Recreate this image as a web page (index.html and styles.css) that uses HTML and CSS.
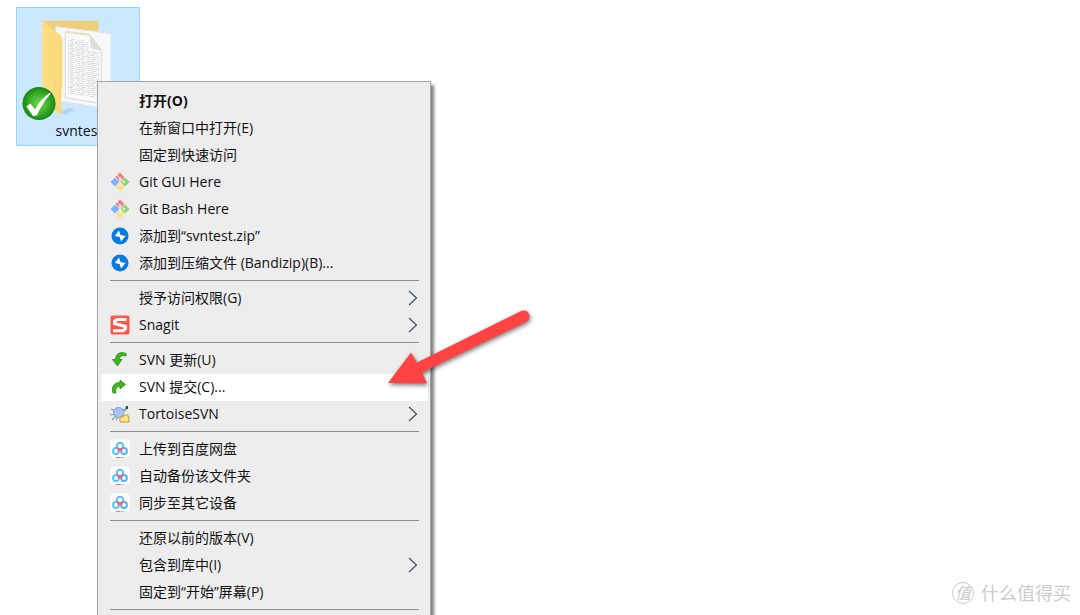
FILE: index.html
```html
<!DOCTYPE html>
<html lang="zh-CN">

<head>
    <meta charset="UTF-8">
    <meta name="viewport" content="width=device-width, initial-scale=1.0">
    <title>svntest</title>
    <link rel="stylesheet" href="styles.css">
</head>

<body>
    <!-- shared icons -->
    <svg class="sprite" aria-hidden="true">
        <symbol id="git" viewBox="0 0 20 20">
            <path d="M10 .5l4.500 4.500L10 9.500 5.500 5z" fill="#f87c7c" />
            <path d="M5 5.500L9.500 10 5 14.500.5 10z" fill="#80b3ff" />
            <path d="M15 5.500l4.500 4.500-4.500 4.500L10.500 10z" fill="#88d96c" />
            <path d="M10 10.500l4.500 4.500-4.500 4.500L5.500 15z" fill="#ffe180" />
            <path d="M7 3l3 3v8M10 7l4 3" fill="none" stroke="#ededed" stroke-width="1" />
            <circle cx="10" cy="6.500" r="1.200" fill="#ededed" />
            <circle cx="10" cy="13.500" r="1.200" fill="#ededed" />
            <circle cx="14" cy="10" r="1.200" fill="#ededed" />
        </symbol>
        <symbol id="bandizip" viewBox="0 0 20 20">
            <circle cx="10" cy="10" r="8.500" fill="#0a7ade" />
            <path d="M9 4.500l1.500 4.500 5 1-4.500 5.500-1.300-4.500-5-1z" fill="#fff" />
        </symbol>
        <symbol id="snagit" viewBox="0 0 20 20">
            <rect x=".5" y=".5" width="19" height="19" rx="2" fill="#ff5548" />
            <path d="M16.500 4.500H7L4.500 6.300V8.500l11 3v2.300L13 15.800H3" fill="none" stroke="#fff" stroke-width="3" />
        </symbol>
        <symbol id="update" viewBox="0 0 20 20">
            <path d="M16 3.500C10 1 5.500 4 5.500 9.500H2.500l5 6.500L12 9.500H9.500c0-3 2-4.500 6.500-3.500z" fill="#42b519" stroke="#2b8a22" stroke-width=".8" />
        </symbol>
        <symbol id="commit" viewBox="0 0 20 20">
            <path d="M3 16C1 10 4 5.500 10 5.500V3l5.500 4.500L10 12V9.500C7 9.500 5 11 6 16z" fill="#42b519" stroke="#2b8a22" stroke-width=".8" />
        </symbol>
        <symbol id="tortoise" viewBox="0 0 20 20">
            <path d="M1 5l5 2M2 16l4-4M0 11l6-1M6 16l2-3M12 6l4-1" fill="none" stroke="#8399ad" stroke-width="1.200" />
            <circle cx="8.500" cy="8.500" r="5" fill="#a5c5fa" stroke="#7898cf" />
            <path d="M13 7l2-4 3-1-1 4-4 3z" fill="#91abc4" />
            <path d="M17 2v3" stroke="#24445d" stroke-width="2" />
            <path d="M10 13h3l1-2h4v2h1v5h-9z" fill="#ffe48a" stroke="#c69a31" />
        </symbol>
        <symbol id="baidu" viewBox="0 0 20 20">
            <rect x=".5" y=".5" width="19" height="18" rx="4" fill="#fff" />
            <circle cx="10" cy="7" r="3.300" fill="none" stroke="#58c0f8" stroke-width="1.900" />
            <circle cx="6" cy="12" r="2.900" fill="none" stroke="#52c8fb" stroke-width="2" />
            <circle cx="14" cy="12" r="2.900" fill="none" stroke="#52b2f8" stroke-width="2" />
            <path d="M7 8.500q3 3.500 6 0M10 10l-2 2M10 10l2 2" fill="none" stroke="#f45f7c" stroke-width="1.900" />
            <path d="M6 18.500h4" stroke="#f76c88" />
            <path d="M10 18.500h4" stroke="#88cdf8" />
        </symbol>
        <symbol id="chevron" viewBox="0 0 10 16">
            <path d="M1 1l7.500 7L1 15" fill="none" stroke="#434765" stroke-width="1.200" />
        </symbol>
    </svg>

    <main class="desktop">
        <div class="folder">
            <svg class="folder-icon" viewBox="0 0 112 112" aria-hidden="true">
                <defs>
                    <linearGradient id="flap" x2="1">
                        <stop offset="0" stop-color="#ffdf87" />
                        <stop offset="1" stop-color="#fbd777" />
                    </linearGradient>
                    <radialGradient id="ball">
                        <stop offset="0" stop-color="#6ed651" />
                        <stop offset=".6" stop-color="#3bae28" />
                        <stop offset="1" stop-color="#168716" />
                    </radialGradient>
                    <pattern id="writing" width="11" height="6" patternUnits="userSpaceOnUse" patternTransform="skewY(8)">
                        <path d="M0 .5h5M6 .5h4M2 2.500h3M6 2.500h5M0 4.500h2M3 4.500h6" stroke="#d2d4d6" stroke-width=".9" />
                    </pattern>
                </defs>
                <path d="M40 103l9-5 5 3-9 5z" fill="#b4d5f0" />
                <path d="M21 9h58v75H40z" fill="#f0cf79" />
                <path d="M35 15l57 7v78l-57-9z" fill="#f5f7f8" stroke="#dce2e6" />
                <path d="M45 21l25 3 12 16v54l-37-6z" fill="#fafafa" stroke="#d9dadb" />
                <path d="M48 27l21 3v10h11v49l-32-5z" fill="url(#writing)" />
                <path d="M46 20l24 3 12 16" fill="none" stroke="#edda9e" />
                <path d="M70 24l12 16-11-3z" fill="#dde0e2" />
                <path d="M21 9l19 15q2 2 2 5v48l-1 4v22q-1 4-4 1L21 90z" fill="url(#flap)" />
                <circle cx="18" cy="94" r="17" fill="url(#ball)" />
                <path d="M5 97l4-3 5 6Q20 89 29 83l1 1Q21 94 16 106l-4 1z" fill="#fff" />
            </svg>
            <span class="folder-name">svntest</span>
        </div>

        <menu class="context-menu">
            <li><button class="item default">打开(O)</button></li>
            <li><button class="item">在新窗口中打开(E)</button></li>
            <li><button class="item">固定到快速访问</button></li>
            <li><button class="item"><svg class="icon"><use href="#git" /></svg>Git GUI Here</button></li>
            <li><button class="item"><svg class="icon"><use href="#git" /></svg>Git Bash Here</button></li>
            <li><button class="item"><svg class="icon"><use href="#bandizip" /></svg>添加到“svntest.zip”</button></li>
            <li><button class="item"><svg class="icon"><use href="#bandizip" /></svg>添加到压缩文件 (Bandizip)(B)...</button></li>
            <li class="separator"></li>
            <li><button class="item">授予访问权限(G)<svg class="chevron"><use href="#chevron" /></svg></button></li>
            <li><button class="item"><svg class="icon"><use href="#snagit" /></svg>Snagit<svg class="chevron"><use href="#chevron" /></svg></button></li>
            <li class="separator"></li>
            <li><button class="item"><svg class="icon"><use href="#update" /></svg>SVN 更新(U)</button></li>
            <li><button class="item active"><svg class="icon"><use href="#commit" /></svg>SVN 提交(C)...</button></li>
            <li><button class="item"><svg class="icon"><use href="#tortoise" /></svg>TortoiseSVN<svg class="chevron"><use href="#chevron" /></svg></button></li>
            <li class="separator"></li>
            <li><button class="item"><svg class="icon"><use href="#baidu" /></svg>上传到百度网盘</button></li>
            <li><button class="item"><svg class="icon"><use href="#baidu" /></svg>自动备份该文件夹</button></li>
            <li><button class="item"><svg class="icon"><use href="#baidu" /></svg>同步至其它设备</button></li>
            <li class="separator"></li>
            <li><button class="item">还原以前的版本(V)</button></li>
            <li><button class="item">包含到库中(I)<svg class="chevron"><use href="#chevron" /></svg></button></li>
            <li><button class="item">固定到“开始”屏幕(P)</button></li>
            <li class="separator"></li>
        </menu>

        <svg class="pointer" viewBox="0 0 160 90" aria-hidden="true">
            <path d="M8 83L31 52.500l6 10L141 11q6-2 8 3t-3 8L42 72.500l5 11z" fill="#ff4343" />
        </svg>

        <div class="watermark">
            <span class="watermark-logo">值</span>
            <span>什么值得买</span>
        </div>
    </main>
</body>

</html>
```
FILE: styles.css
```css
* {
    box-sizing: border-box;
}

body {
    margin: 0;
    background-color: #fff;
    color: #111;
    font-family: "Open Sans", "Noto Sans CJK SC", sans-serif;
    font-size: 14px;
}

.sprite {
    position: absolute;
    width: 0;
    height: 0;
}

.desktop {
    position: relative;
    height: 100vh;
    padding: 7px 16px;
    overflow: hidden;
}

.folder {
    display: flex;
    flex-direction: column;
    width: 124px;
    height: 139px;
    padding: 4px 3px;
    background-color: #cce8ff;
    border: 1px solid #99d1ff;
}

.folder-icon {
    width: 112px;
    height: 112px;
}

.folder-name {
    padding-left: 2px;
    line-height: 20px;
    text-align: center;
}

.context-menu {
    position: absolute;
    top: 81px;
    left: 97px;
    width: 334px;
    margin: 0;
    padding: 6px 2px 24px 3px;
    list-style: none;
    background-color: #ededed;
    border: 1px solid #a5a5a5;
    box-shadow: 3px 4px 3px rgba(0, 0, 0, 0.5);
}

.item {
    display: flex;
    align-items: center;
    width: 100%;
    height: 27px;
    padding: 0 10px 2px 38px;
    border: 0;
    background: none;
    color: inherit;
    font: inherit;
    line-height: 20px;
    text-align: left;
    white-space: pre;
}

.item:hover,
.item.active {
    background-color: #fff;
}

.default {
    font-weight: bold;
}

.icon {
    width: 20px;
    height: 20px;
    margin-left: -29px;
    margin-right: 9px;
}

.chevron {
    width: 10px;
    height: 16px;
    margin-left: auto;
}

.separator {
    height: 1px;
    margin: 3px 9px 4px;
    background-color: #919191;
}

.pointer {
    position: absolute;
    top: 300px;
    left: 380px;
    width: 160px;
    height: 90px;
    filter: drop-shadow(1px 2px 2px rgba(0, 0, 0, 0.5));
}

.watermark {
    position: absolute;
    right: 9px;
    bottom: 10px;
    display: flex;
    align-items: center;
    gap: 7px;
    color: #ccc;
    font-size: 18px;
    line-height: 24px;
}

.watermark-logo {
    width: 22px;
    height: 22px;
    border: 1px solid #ccc;
    border-radius: 50%;
    font-size: 16px;
    font-style: italic;
    line-height: 20px;
    text-align: center;
}
```
